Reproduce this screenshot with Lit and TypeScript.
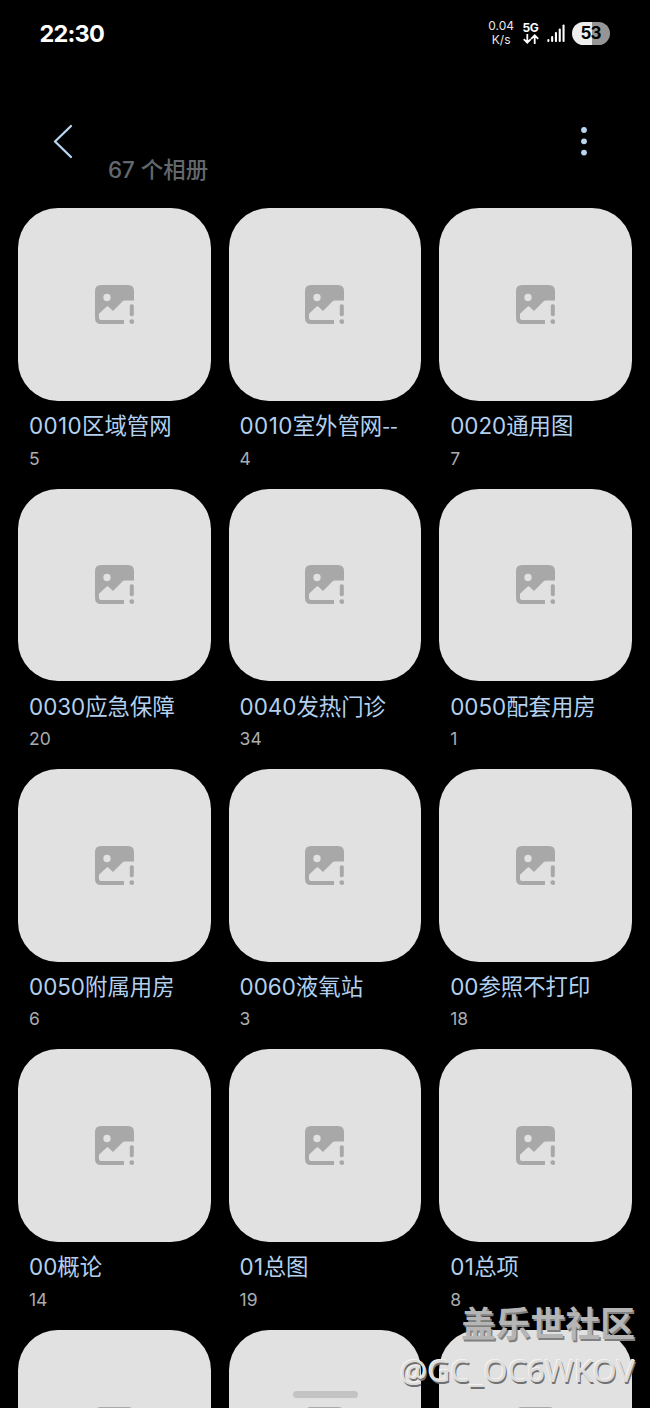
import { LitElement, html, css, svg } from "lit";
import { customElement, property } from "lit/decorators.js";

interface Album {
  name: string;
  count: number | null;
}

const ALBUMS: Album[] = [
  { name: "0010区域管网", count: 5 },
  { name: "0010室外管网--", count: 4 },
  { name: "0020通用图", count: 7 },
  { name: "0030应急保障", count: 20 },
  { name: "0040发热门诊", count: 34 },
  { name: "0050配套用房", count: 1 },
  { name: "0050附属用房", count: 6 },
  { name: "0060液氧站", count: 3 },
  { name: "00参照不打印", count: 18 },
  { name: "00概论", count: 14 },
  { name: "01总图", count: 19 },
  { name: "01总项", count: 8 },
  { name: "", count: null },
  { name: "", count: null },
  { name: "", count: null },
];

@customElement("album-card")
export class AlbumCard extends LitElement {
  @property() name = "";
  @property({ type: Number }) count: number | null = null;

  static styles = css`
    :host {
      display: block;
      height: 280.4px;
    }
    .cover {
      height: 192.6px;
      border-radius: 40px;
      background: #e1e1e1;
      display: flex;
      align-items: center;
      justify-content: center;
    }
    .icon {
      width: 39px;
      height: 39px;
      display: block;
    }
    .name {
      margin: 7.4px 0 0 11px;
      height: 32px;
      line-height: 32px;
      font-size: 22.4px;
      color: #b3d0ef;
      white-space: nowrap;
    }
    .digits.narrow {
      letter-spacing: 0.4px;
    }
    .dash {
      font-family: "Noto Sans CJK SC", sans-serif;
    }
    .count {
      margin: 6.4px 0 0 11px;
      height: 24px;
      line-height: 24px;
      font-size: 17.5px;
      color: #a9adb0;
    }
  `;

  private renderName() {
    const [, digits, title, dash] = this.name.match(/^(\d*)([^-]*)(-*)$/)!;
    const narrow = digits.includes("1") ? "digits narrow" : "digits";
    return html`<div class="name"><span class=${narrow}>${digits}</span>${title}<span class="dash">${dash}</span></div>`;
  }

  render() {
    return html`
      <div class="cover">
        <svg class="icon" viewBox="0 0 39 39" fill="#a8a8a8">
          <path
            fill-rule="evenodd"
            d="M6 0H33Q39 0 39 6V15.6H30Q28.4 15.6 27.2 16.8L18 26L13.6 21.8Q12.5 20.8 11.4 21.8L4 28.8V33Q4 35 6 35H29V39H6Q0 39 0 33V6Q0 0 6 0ZM12 8.8A3.7 3.7 0 1 0 12 16.2A3.7 3.7 0 1 0 12 8.8Z"
          />
          <rect x="34.8" y="19.2" width="4" height="12" rx="1.6" />
          <circle cx="36.8" cy="36.6" r="2.4" />
        </svg>
      </div>
      ${this.name
        ? html`${this.renderName()}
            <div class="count">${this.count}</div>`
        : null}
    `;
  }
}

@customElement("app-root")
export class AppRoot extends LitElement {
  static styles = css`
    :host {
      display: block;
      position: relative;
      width: 650px;
      height: 1408px;
      overflow: hidden;
      background: #000;
      font-family: Inter, "Noto Sans CJK SC", sans-serif;
    }
    .status {
      height: 66px;
      box-sizing: border-box;
      padding: 0 40px 0 39.5px;
      display: flex;
      align-items: center;
      color: #fff;
    }
    .time {
      flex: 1;
      font-size: 23.5px;
      font-weight: 700;
      letter-spacing: -0.8px;
    }
    .speed {
      font-size: 12px;
      line-height: 14px;
      text-align: center;
      color: #e8e8e8;
      margin-right: 8px;
    }
    .net {
      width: 17px;
      display: flex;
      flex-direction: column;
      align-items: center;
      font-size: 12px;
      line-height: 11px;
      font-weight: 700;
      letter-spacing: -0.4px;
      margin-right: 8px;
    }
    .arrows {
      width: 16px;
      height: 10px;
      margin-top: 1px;
    }
    .signal {
      width: 18px;
      height: 18px;
      margin-right: 7px;
    }
    .battery {
      width: 38px;
      height: 23px;
      border-radius: 12px;
      background: linear-gradient(90deg, #ededed 53%, #959595 53%);
      color: #000;
      font-size: 17px;
      line-height: 23px;
      font-weight: 700;
      letter-spacing: -0.8px;
      text-indent: -1px;
      text-align: center;
    }
    .header {
      height: 142.3px;
      box-sizing: border-box;
      padding: 57px 60px 0 52px;
      display: flex;
      align-items: flex-start;
    }
    .back {
      width: 22px;
      height: 37px;
    }
    .total {
      flex: 1;
      margin: 31px 0 0 34px;
      font-size: 22.4px;
      line-height: 32px;
      font-weight: 500;
      color: #62686d;
    }
    .more {
      width: 12px;
      height: 37px;
    }
    .grid {
      display: grid;
      grid-template-columns: repeat(3, 192.6px);
      column-gap: 18px;
      padding-left: 18px;
    }
    .handle {
      position: absolute;
      left: 292.5px;
      top: 1391px;
      width: 65px;
      height: 7px;
      border-radius: 3.5px;
      background: #c3c3c3;
    }
    .mark {
      position: absolute;
      right: 15px;
      top: 1297px;
      text-align: right;
      white-space: nowrap;
    }
    .community {
      font-size: 34.8px;
      line-height: 50px;
      font-weight: 700;
      color: #b5b5b5;
      text-shadow: 1.5px 2px 0 #808080;
      font-family: "Noto Sans CJK SC", sans-serif;
    }
    .user {
      font-family: "Noto Sans", sans-serif;
      font-size: 31px;
      line-height: 46px;
      color: #dcdcdc;
      text-shadow: -1px -1px 0 #f6f2ec, 1px 1.5px 0 #707070;
    }
  `;

  render() {
    return html`
      <div class="status">
        <div class="time">22:30</div>
        <div class="speed">0.04<br />K/s</div>
        <div class="net">
          <span>5G</span>
          <svg class="arrows" viewBox="0 0 16 10" fill="none" stroke="#fff" stroke-width="1.8">
            <path d="M4.3 0V8.6M.8 5.2L4.3 8.7L7.8 5.2M11.7 10V1.4M8.2 4.8L11.7 1.3L15.2 4.8" />
          </svg>
        </div>
        <svg class="signal" viewBox="0 0 18 18" fill="#fff">
          ${[3, 6, 10, 13.5, 17.5].map(
            (h, i) => svg`<rect x=${0.3 + i * 3.8} y=${18 - h} width="2.1" height=${h} rx="1" />`
          )}
        </svg>
        <div class="battery">53</div>
      </div>
      <div class="header">
        <svg class="back" viewBox="0 0 22 37" fill="none" stroke="#b8d6f2" stroke-width="2.3" stroke-linecap="round" stroke-linejoin="round">
          <path d="M19 3L3 18.5L19 34" />
        </svg>
        <div class="total">67 个相册</div>
        <svg class="more" viewBox="0 0 12 37" fill="#b8d6f2">
          ${[7, 18.3, 29.6].map((y) => svg`<circle cx="6" cy=${y} r="2.9" />`)}
        </svg>
      </div>
      <div class="grid">
        ${ALBUMS.map((a) => html`<album-card .name=${a.name} .count=${a.count}></album-card>`)}
      </div>
      <div class="handle"></div>
      <div class="mark">
        <div class="community">盖乐世社区</div>
        <div class="user">@GC_OC6WKOV</div>
      </div>
    `;
  }
}
